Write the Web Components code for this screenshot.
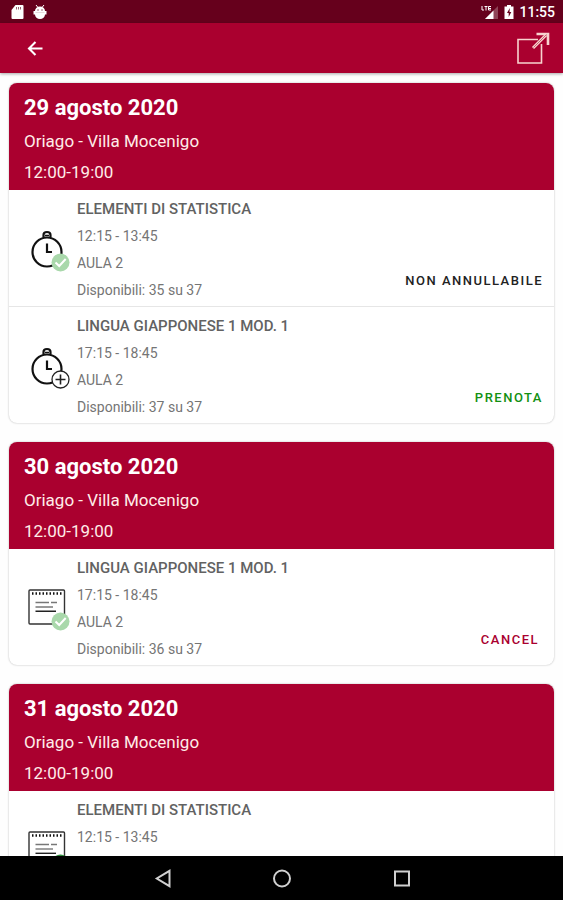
<!DOCTYPE html>
<html lang="it">
<head>
<meta charset="utf-8">
<meta name="viewport" content="width=device-width, initial-scale=1">
<title>Prenotazioni</title>
<style>
  body {
    margin: 0;
    font-family: Roboto, "Liberation Sans", sans-serif;
    --brand: #aa002f;
    --brand-dark: #66001c;
  }
</style>
</head>
<body>
<booking-app>
  <day-card>
    <span slot="date">29 agosto 2020</span>
    <span slot="place">Oriago - Villa Mocenigo</span>
    <span slot="hours">12:00-19:00</span>
    <lesson-row icon="clock" badge="check" action="locked">
      <span slot="name">ELEMENTI DI STATISTICA</span>
      <span slot="time">12:15 - 13:45</span>
      <span slot="room">AULA 2</span>
      <span slot="seats">Disponibili: 35 su 37</span>
      <span slot="action">NON ANNULLABILE</span>
    </lesson-row>
    <lesson-row icon="clock" badge="plus" action="book">
      <span slot="name">LINGUA GIAPPONESE 1 MOD. 1</span>
      <span slot="time">17:15 - 18:45</span>
      <span slot="room">AULA 2</span>
      <span slot="seats">Disponibili: 37 su 37</span>
      <span slot="action">PRENOTA</span>
    </lesson-row>
  </day-card>
  <day-card>
    <span slot="date">30 agosto 2020</span>
    <span slot="place">Oriago - Villa Mocenigo</span>
    <span slot="hours">12:00-19:00</span>
    <lesson-row icon="note" badge="check" action="cancel">
      <span slot="name">LINGUA GIAPPONESE 1 MOD. 1</span>
      <span slot="time">17:15 - 18:45</span>
      <span slot="room">AULA 2</span>
      <span slot="seats">Disponibili: 36 su 37</span>
      <span slot="action">CANCEL</span>
    </lesson-row>
  </day-card>
  <day-card>
    <span slot="date">31 agosto 2020</span>
    <span slot="place">Oriago - Villa Mocenigo</span>
    <span slot="hours">12:00-19:00</span>
    <lesson-row icon="note" badge="plus-green">
      <span slot="name">ELEMENTI DI STATISTICA</span>
      <span slot="time">12:15 - 13:45</span>
    </lesson-row>
  </day-card>
</booking-app>

<template id="status-bar">
  <style>
    :host {
      display: flex;
      align-items: center;
      justify-content: space-between;
      flex: none;
      height: 23px;
      padding: 0 8px 0 10px;
      background: var(--brand-dark);
      color: #fff;
      font-size: 14px;
      font-weight: 500;
    }
    div { display: flex; align-items: center; }
    .left { gap: 9px; }
    .right { gap: 5px; }
    svg { display: block; }
  </style>
  <div class="left">
    <svg width="14" height="16" viewBox="0 0 14 16" aria-hidden="true">
      <path d="M5.500 1H12.500a1 1 0 0 1 1 1V14a1 1 0 0 1-1 1H2.500a1 1 0 0 1-1-1V6z" fill="#fff"/>
      <path d="M6.500 3v2.500M8.500 3v2.500M10.500 3v2.500" stroke="#9a6474" stroke-width="1"/>
    </svg>
    <svg width="14" height="16" viewBox="0 0 14 16" aria-hidden="true">
      <path d="M3 1l2 2.500M11 1L9 3.500" stroke="#fff" stroke-width="1"/>
      <path d="M2 7a5 4.600 0 0 1 10 0h1.500v3.500H12a5 4.500 0 0 1-10 0H.5V7z" fill="#fff"/>
      <circle cx="5" cy="6" r=".8" fill="#8a5060"/>
      <circle cx="9" cy="6" r=".8" fill="#8a5060"/>
      <path d="M2.500 8.500h9" stroke="#d8c0c6" stroke-width=".6"/>
    </svg>
  </div>
  <div class="right">
    <svg width="19" height="16" viewBox="0 0 19 16" aria-hidden="true">
      <path d="M18 2v13H5z" fill="#8f4558"/>
      <path d="M13.500 6.500V15H5z" fill="#fff"/>
      <path d="M2 2v4h2M4.500 2.500h3M6 2.500V6.500M11 2.500H8.500v3.500H11M8.500 4.500H11" fill="none" stroke="#fff" stroke-width="1"/>
    </svg>
    <svg width="10" height="16" viewBox="0 0 10 16" aria-hidden="true">
      <path d="M3 1h4v1.500h2.500V15H.5V2.500H3z" fill="#fff"/>
      <path d="M5.800 4L3 9h1.700v4L7.300 8H5.500z" fill="#66001c"/>
    </svg>
    <span>11:55</span>
  </div>
</template>

<template id="app-bar">
  <style>
    :host {
      display: flex;
      align-items: center;
      justify-content: space-between;
      flex: none;
      height: 50px;
      padding: 0 10px 0 20px;
      background: var(--brand);
      box-shadow: 0 1px 3px rgba(0, 0, 0, 0.35);
      z-index: 1;
    }
    button {
      display: flex;
      padding: 0;
      border: 0;
      background: none;
      cursor: pointer;
    }
  </style>
  <button type="button" aria-label="Indietro">
    <svg width="30" height="30" viewBox="0 0 30 30">
      <path d="M22.500 15.500H9M15.500 9L9 15.500l6.500 6.500" fill="none" stroke="#fff" stroke-width="2.100"/>
    </svg>
  </button>
  <button type="button" aria-label="Apri">
    <svg width="40" height="40" viewBox="0 0 40 40">
      <g fill="none" stroke="#f8d3cf" stroke-width="1.600">
        <path d="M25 11.500H5V35h23.500V16"/>
        <path d="M20 20L33 7" stroke-width="3"/>
        <path d="M23.500 6h11.500V17" stroke-width="2.600"/>
      </g>
      <path d="M20.500 19.500L33.500 6.500" stroke="#b53a4c" stroke-width=".7"/>
    </svg>
  </button>
</template>

<template id="nav-bar">
  <style>
    :host {
      display: flex;
      align-items: center;
      justify-content: center;
      flex: none;
      gap: 88px;
      height: 44px;
      background: #000;
    }
    button {
      display: flex;
      padding: 0;
      border: 0;
      background: none;
    }
    svg { fill: none; stroke: #d0d0d0; stroke-width: 2; }
  </style>
  <button type="button" aria-label="Indietro">
    <svg width="32" height="32" viewBox="0 0 32 32"><path d="M23.500 8.800v15.400L10.800 16.500z"/></svg>
  </button>
  <button type="button" aria-label="Home">
    <svg width="32" height="32" viewBox="0 0 32 32"><circle cx="16" cy="16.500" r="8"/></svg>
  </button>
  <button type="button" aria-label="Recenti">
    <svg width="32" height="32" viewBox="0 0 32 32"><rect x="9" y="9.500" width="14" height="14"/></svg>
  </button>
</template>

<template id="booking-app">
  <style>
    :host {
      display: flex;
      flex-direction: column;
      height: 100vh;
      background: #fefefe;
    }
    main {
      display: flex;
      flex-direction: column;
      flex: 1;
      gap: 19px;
      min-height: 0;
      padding: 10px 9px;
      overflow-y: auto;
      scrollbar-width: none;
    }
  </style>
  <status-bar></status-bar>
  <app-bar></app-bar>
  <main><slot></slot></main>
  <nav-bar></nav-bar>
</template>

<template id="day-card">
  <style>
    :host {
      display: block;
      flex: none;
      border-radius: 8px;
      background: #fff;
      box-shadow: 0 0 2px rgba(0, 0, 0, 0.3);
      overflow: hidden;
    }
    header {
      padding: 7px 15px 2px;
      background: var(--brand);
      color: #fff;
    }
    h2, p { margin: 0; }
    h2 {
      font-size: 22px;
      font-weight: 700;
      line-height: 36px;
    }
    p {
      font-size: 17px;
      line-height: 31px;
      color: #ffece8;
    }
  </style>
  <header>
    <h2><slot name="date"></slot></h2>
    <p><slot name="place"></slot></p>
    <p><slot name="hours"></slot></p>
  </header>
  <slot></slot>
</template>

<template id="lesson-row">
  <style>
    :host {
      display: flex;
      gap: 7px;
      padding: 6px 11px 2px 19px;
      color: #757575;
      font-size: 14px;
      line-height: 27px;
    }
    :host(:not(:last-child)) { border-bottom: 1px solid #e6e6e6; }
    .icon {
      flex: none;
      width: 42px;
      height: 42px;
      margin-top: 34px;
    }
    .info { flex: 1; }
    h3, p {
      min-height: 27px;
      margin: 0;
    }
    h3 {
      font-size: 15px;
      font-weight: 500;
      color: #626262;
    }
    button {
      align-self: flex-end;
      padding: 0;
      margin-bottom: 10px;
      border: 0;
      background: none;
      font: 500 13px/27px Roboto, "Liberation Sans", sans-serif;
      letter-spacing: 1.5px;
      color: #222;
    }
    .book { color: #129012; }
    .cancel { color: var(--brand); padding-right: 4px; }
  </style>
  <svg class="icon" viewBox="0 0 42 42" aria-hidden="true"></svg>
  <div class="info">
    <h3><slot name="name"></slot></h3>
    <p><slot name="time"></slot></p>
    <p><slot name="room"></slot></p>
    <p><slot name="seats"></slot></p>
  </div>
  <button type="button"><slot name="action"></slot></button>
</template>

<script>
const icons = {
  clock: `
    <g fill="none" stroke="#111" stroke-width="2.200">
      <circle cx="19" cy="22" r="14.500"/>
      <path d="M15.500 7.500V5q0-3 3.500-3t3.500 3v2.500"/>
      <path d="M17 5.500h4" stroke-width="1.500"/>
      <path d="M19 13.500V22h5"/>
    </g>`,
  note: `
    <rect x="1" y="1" width="35.500" height="34" rx="1" fill="#fff" stroke="#333" stroke-width="1.400"/>
    <path d="M4 4.500h31" stroke="#111" stroke-width="2.400" stroke-dasharray="1.500 2"/>
    <g fill="none" stroke="#777" stroke-width="1.400">
      <path d="M7.500 13.500H21M23 13.500h6"/>
      <path d="M7.500 18H25"/>
      <path d="M7.500 22.300H28" stroke="#222"/>
    </g>`
};

const badges = {
  check: `
    <circle cx="32.500" cy="32.500" r="9" fill="#a9d8ab"/>
    <path d="M27.500 32.500l3.700 3.500 6.500-7" fill="none" stroke="#fff" stroke-width="2"/>`,
  plus: `
    <circle cx="32.500" cy="32.500" r="8.500" fill="#fff" stroke="#222" stroke-width="1.300"/>
    <path d="M32.500 27.500v10M27.500 32.500h10" stroke="#222" stroke-width="1.600"/>`,
  "plus-green": `
    <circle cx="32.500" cy="32.500" r="9" fill="#2e8b3a"/>
    <path d="M32.500 27.500v10M27.500 32.500h10" stroke="#fff" stroke-width="1.600"/>`
};

class TemplateElement extends HTMLElement {
  constructor() {
    super();
    this.attachShadow({ mode: "open" });
    const template = document.getElementById(this.localName);
    this.shadowRoot.appendChild(template.content.cloneNode(true));
  }
}

class LessonRow extends TemplateElement {
  connectedCallback() {
    const action = this.getAttribute("action");
    const button = this.shadowRoot.querySelector("button");
    this.shadowRoot.querySelector(".icon").innerHTML =
      icons[this.getAttribute("icon")] + badges[this.getAttribute("badge")];
    button.hidden = !action;
    button.disabled = action === "locked";
    button.className = action || "";
  }
}

customElements.define("status-bar", class extends TemplateElement {});
customElements.define("app-bar", class extends TemplateElement {});
customElements.define("nav-bar", class extends TemplateElement {});
customElements.define("day-card", class extends TemplateElement {});
customElements.define("lesson-row", LessonRow);
customElements.define("booking-app", class extends TemplateElement {});
</script>
</body>
</html>
